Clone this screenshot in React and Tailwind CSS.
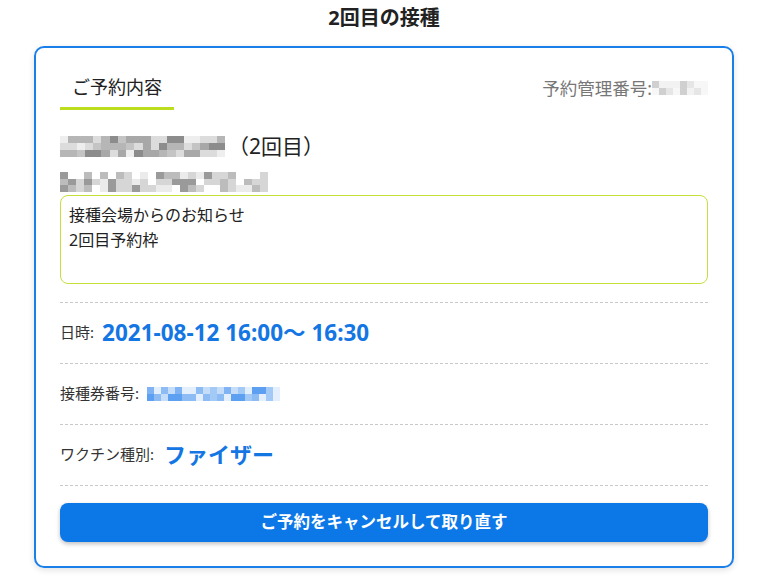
import React from 'react';

const GRAYS = ['bg-[#8c8c8c]', 'bg-[#a8a8a8]', 'bg-[#c4c4c4]', 'bg-[#dcdcdc]', 'bg-[#eeeeee]', 'bg-[#b6b6b6]'];
const BLUES = ['bg-[#5d9ff0]', 'bg-[#7fb3f3]', 'bg-[#a3c9f7]', 'bg-[#c6ddfa]', 'bg-[#e4effd]', 'bg-[#8dbbf4]'];

// blurred-out text, drawn as a mosaic of shaded cells
const Mosaic = ({ cols, rows, cell, palette = GRAYS, seed = 1 }) => {
  const pick = (r, c) => {
    const n = Math.abs(Math.sin((r + 1) * 12.9898 + (c + 1) * 78.233 + seed * 3.7) * 43758.5453);
    return palette[Math.floor((n - Math.floor(n)) * palette.length)];
  };
  return (
    <div className="flex flex-col">
      {Array.from({ length: rows }).map((_, r) => (
        <div key={r} className="flex">
          {Array.from({ length: cols }).map((_, c) => (
            <div key={c} className={`${cell} ${pick(r, c)}`} />
          ))}
        </div>
      ))}
    </div>
  );
};

const InfoRow = ({ label, children }) => (
  <div className="h-[61px] border-t border-dashed border-[#c9c9c9] flex items-center gap-2">
    <span className="text-[15px] text-[#333]">{label}</span>
    {children}
  </div>
);

export default function App() {
  return (
    <div
      className="w-[768px] h-[576px] bg-white overflow-hidden"
      style={{ fontFamily: '"Noto Sans", "Noto Sans CJK JP", sans-serif' }}
    >
      <h1 className="text-center text-[20px] font-bold text-[#222] leading-[28px] pt-[4px]">2回目の接種</h1>

      <div className="mx-[34px] mt-[14px] border-2 border-[#1a7fe8] rounded-[10px] shadow-[0_2px_6px_rgba(0,0,0,0.12)] px-[24px] pt-[25px] pb-[24px]">
        {/* header */}
        <div className="flex items-start justify-between">
          <div className="border-b-[3px] border-[#bcdc1e] px-[12px] pb-[6px] text-[18px] leading-[28px] text-[#222]">
            ご予約内容
          </div>
          <div className="flex items-center pt-[2px] text-[17.5px] leading-[26px] text-[#777]">
            予約管理番号:
            <Mosaic cols={8} rows={2} cell="w-[7px] h-[7px]" palette={['bg-[#e6e6e6]', 'bg-[#f2f2f2]', 'bg-[#d0d0d0]', 'bg-[#f7f7f7]']} seed={4} />
          </div>
        </div>

        {/* name */}
        <div className="mt-[22px] flex items-center">
          <Mosaic cols={20} rows={3} cell="w-[8.25px] h-[7px]" seed={2} />
          <span className="ml-[3px] text-[21px] leading-[28px] text-[#222]">（2回目）</span>
        </div>
        <div className="mt-[12px]">
          <Mosaic cols={26} rows={3} cell="w-[8px] h-[6.5px]" palette={['bg-[#9a9a9a]', 'bg-[#bcbcbc]', 'bg-[#d6d6d6]', 'bg-[#ebebeb]', 'bg-[#ffffff]']} seed={7} />
        </div>

        {/* notice */}
        <div className="mt-[3px] h-[89px] border-[1.5px] border-[#c6e03a] rounded-[8px] px-[8px] pt-[7px] text-[16px] leading-[25px] text-[#222]">
          <div>接種会場からのお知らせ</div>
          <div>2回目予約枠</div>
        </div>

        <div className="mt-[18px]">
          <InfoRow label="日時:">
            <span className="text-[22.5px] font-bold text-[#1476e3]">2021-08-12 16:00〜 16:30</span>
          </InfoRow>
          <InfoRow label="接種券番号:">
            <Mosaic cols={19} rows={2} cell="w-[7px] h-[7px]" palette={BLUES} seed={5} />
          </InfoRow>
          <InfoRow label="ワクチン種別:">
            <span className="ml-[2px] text-[22px] font-bold text-[#1476e3]">ファイザー</span>
          </InfoRow>
          <div className="border-t border-dashed border-[#c9c9c9]" />
        </div>

        <button className="mt-[17px] w-full h-[39px] rounded-[8px] bg-[#0c78e8] text-white text-[16.5px] font-bold shadow-[0_2px_4px_rgba(0,0,0,0.25)]">
          ご予約をキャンセルして取り直す
        </button>
      </div>
    </div>
  );
}
